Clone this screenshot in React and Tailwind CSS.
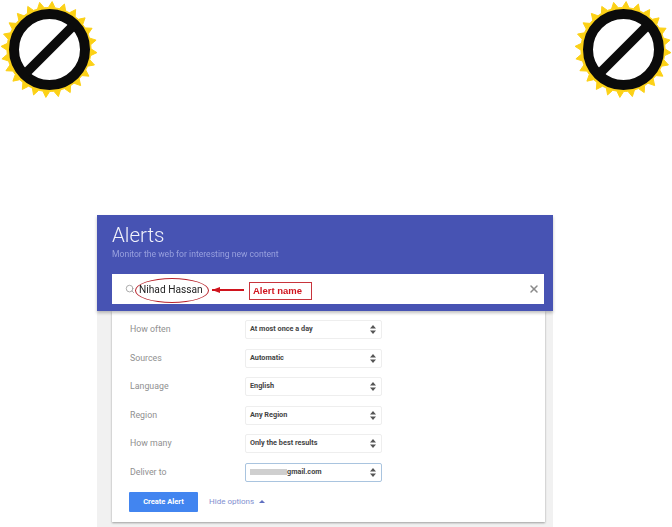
import { Search, X } from 'lucide-react'

const rows = [
  { label: 'How often', value: 'At most once a day' },
  { label: 'Sources', value: 'Automatic' },
  { label: 'Language', value: 'English' },
  { label: 'Region', value: 'Any Region' },
  { label: 'How many', value: 'Only the best results' },
  { label: 'Deliver to', value: 'gmail.com', focus: true },
]

// black "no" sign inside a yellow toothed disc
function Seal() {
  const count = 24
  const points = []
  for (let i = 0; i < count; i++) {
    const a = ((i + 0.25) * 2 * Math.PI) / count
    const side = (0.62 * Math.PI) / count
    const at = (r, t) => `${49 + r * Math.cos(t)},${49.5 + r * Math.sin(t)}`
    points.push(at(42, a - Math.PI / count))
    points.push(at(42, a - side))
    points.push(at(48, a))
    points.push(at(42, a + side))
  }
  return (
    <svg width="98" height="98" viewBox="0 0 98 98" className="block">
      <polygon points={points.join(' ')} fill="#fcd116" stroke="#fcd116" strokeWidth="1" strokeLinejoin="round" />
      <circle cx="49.5" cy="49.5" r="35.5" fill="#fff" stroke="#0b0b0b" strokeWidth="10" />
      <line x1="26" y1="73" x2="73" y2="26" stroke="#0b0b0b" strokeWidth="9.5" />
    </svg>
  )
}

function Updown() {
  return (
    <svg width="6" height="9" viewBox="0 0 6 9" className="text-[#555]">
      <path d="M3 0 L6 3.4 H0 Z M3 9 L0 5.6 H6 Z" fill="currentColor" />
    </svg>
  )
}

export default function App() {
  return (
    <div className="h-[527px] w-[672px] overflow-hidden bg-white font-['Roboto',sans-serif]">
      <div className="flex justify-between">
        <Seal />
        <Seal />
      </div>

      <div className="relative mx-auto mt-[117px] h-[312px] w-[456px] translate-x-[-11px] bg-[#f1f1f1] blur-[0.4px]">
        {/* blue header */}
        <div className="relative z-10 h-[96px] bg-[#4753b3] px-[15px] pt-[6px] shadow-[0_2px_3px_rgba(0,0,0,0.25)]">
          <h1 className="text-[20.5px] leading-[28px] font-light text-[#f2f3fb]">Alerts</h1>
          <p className="mt-[-1px] text-[8.6px] leading-[12px] text-[#98a0de]">Monitor the web for interesting new content</p>
          <div className="mt-[14px] flex h-[30px] w-[432px] items-center bg-white pr-[4px] pl-[13px]">
            <Search className="h-[10px] w-[10px] text-[#9a9a9a]" strokeWidth={2} />
            <span className="mt-[2px] ml-[4px] text-[10.2px] text-[#222]">Nihad Hassan</span>
            <X className="ml-auto h-[12px] w-[12px] text-[#8a8a8a]" strokeWidth={3} />
          </div>

          {/* red annotation over the search box */}
          <div className="absolute top-[63px] left-[38px] h-[25px] w-[74px] rounded-[50%] border border-[#b8232b]" />
          <div className="absolute top-[74px] left-[115px] h-[2px] w-[32px] bg-[#d0141e]" />
          <div className="absolute top-[72px] left-[115px] h-0 w-0 border-y-[3px] border-r-[8px] border-y-transparent border-r-[#d0141e]" />
          <div className="absolute top-[67px] left-[152px] flex h-[18px] w-[63px] items-center border-[1.5px] border-[#c8343c] pl-[3px] font-['Liberation_Sans',sans-serif] text-[9.5px] font-bold text-[#d0141e]">
            Alert name
          </div>
        </div>

        {/* options card */}
        <div className="mr-[8px] ml-[15px] flex h-[211px] flex-col bg-white pt-[9px] pl-[17px] shadow-[0_1px_2px_rgba(0,0,0,0.35)]">
          <div className="flex flex-col gap-[9.6px]">
            {rows.map(row => (
              <div key={row.label} className="flex h-[19px] items-center">
                <span className="w-[116px] pl-[1px] text-[8.8px] text-[#909090]">{row.label}</span>
                <div className={`flex h-[19px] w-[137px] items-center justify-between rounded-[2px] border bg-white pr-[5px] pl-[4px] ${row.focus ? 'border-[#a9c4df]' : 'border-[#eeeeee]'}`}>
                  <span className="flex items-center text-[7.3px] font-bold text-[#444]">
                    {row.focus && <span className="h-[6px] w-[37px] bg-[#cfcfcf]" />}
                    {row.value}
                  </span>
                  <Updown />
                </div>
              </div>
            ))}
          </div>
          <div className="mt-[10px] flex items-center">
            <button className="h-[20px] w-[69px] rounded-[1px] bg-[#4285f0] text-[7.5px] font-bold text-white">Create Alert</button>
            <span className="ml-[11px] text-[8px] text-[#7f8fd0]">Hide options</span>
            <span className="ml-[5px] h-0 w-0 border-x-[3px] border-b-[3px] border-x-transparent border-b-[#5f6fc0]" />
          </div>
        </div>
      </div>
    </div>
  )
}
